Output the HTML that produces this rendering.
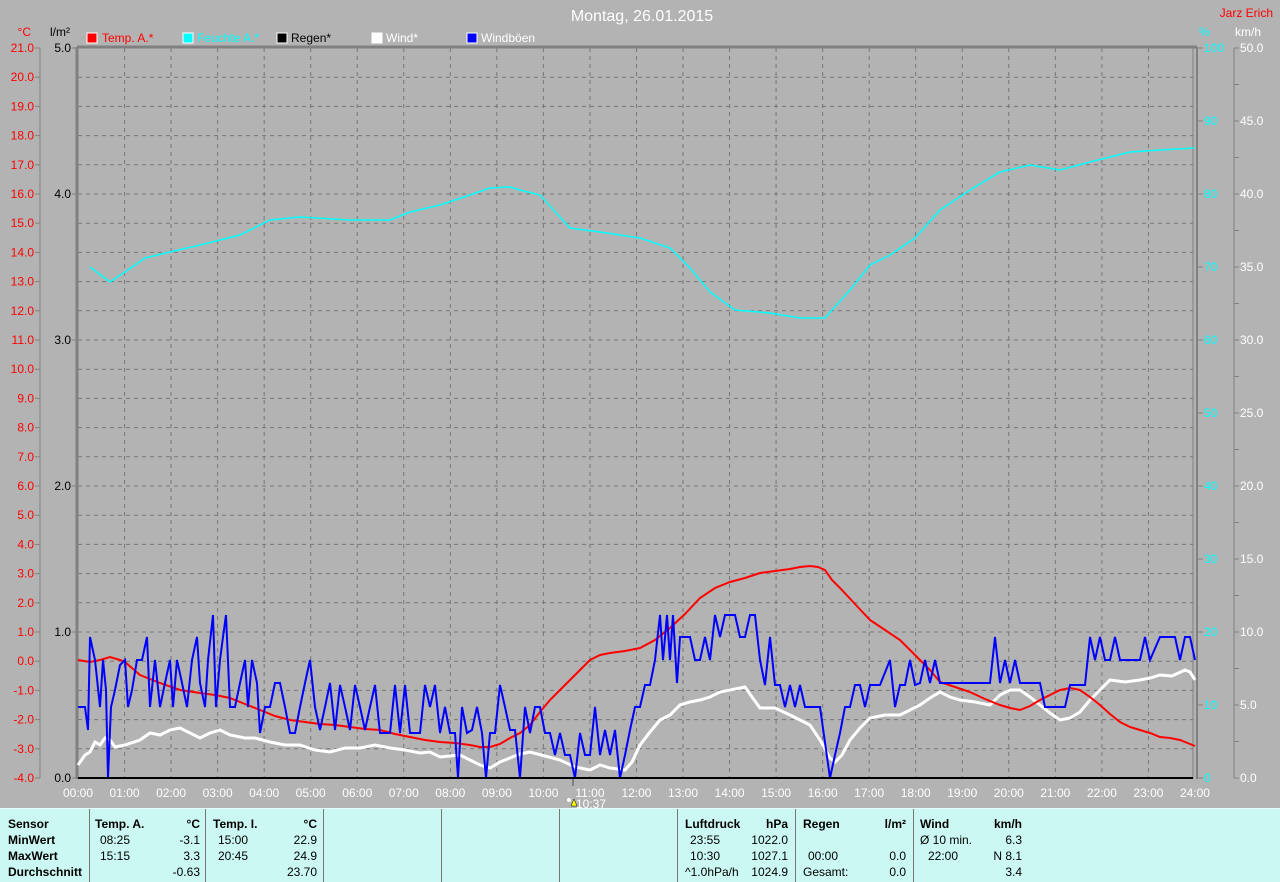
<!DOCTYPE html>
<html><head><meta charset="utf-8"><style>
html,body{margin:0;padding:0;background:#b3b3b3;width:1280px;height:881px;overflow:hidden;font-family:"Liberation Sans",sans-serif;}
svg{position:absolute;left:0;top:0}
.tbl{position:absolute;left:0;top:808px;width:1280px;height:73px;background:#ccf8f4;border-top:1px solid #e8ffff;font-size:12px;color:#000}
.c{position:absolute;top:0;height:73px;border-left:1px solid #777}
.t{position:absolute;white-space:nowrap}
.b{font-weight:bold}
</style></head><body>
<svg width="1280" height="808" xmlns="http://www.w3.org/2000/svg" font-family="Liberation Sans, sans-serif" font-size="12">
<text x="642" y="21" fill="#fff" font-size="16" text-anchor="middle">Montag, 26.01.2015</text>
<text x="1273" y="17" fill="#f00" text-anchor="end">Jarz Erich</text>
<text x="31" y="36" fill="#f00" text-anchor="end">°C</text>
<text x="70" y="36" fill="#000" text-anchor="end">l/m²</text>
<text x="1199" y="36" fill="#0ff">%</text>
<text x="1235" y="36" fill="#fff">km/h</text>
<g>
<rect x="87" y="33" width="10" height="10" fill="#f00" stroke="#fff"/><text x="102" y="42" fill="#f00">Temp. A.*</text>
<rect x="183" y="33" width="10" height="10" fill="#0ff" stroke="#fff"/><text x="197" y="42" fill="#0ff">Feuchte A.*</text>
<rect x="277" y="33" width="10" height="10" fill="#000" stroke="#fff"/><text x="291" y="42" fill="#000">Regen*</text>
<rect x="372" y="33" width="10" height="10" fill="#fff" stroke="#fff"/><text x="386" y="42" fill="#fff">Wind*</text>
<rect x="467" y="33" width="10" height="10" fill="#00f" stroke="#fff"/><text x="481" y="42" fill="#fff">Windböen</text>
</g>
<g id="grid" stroke="#777" stroke-dasharray="4,4" stroke-width="1">
</g>
<g id="axes"></g>
<line x1="77" y1="47" x2="1197" y2="47" stroke="#808080" stroke-width="3"/>
<line x1="77" y1="47" x2="77" y2="779" stroke="#808080" stroke-width="3"/>
<line x1="1193" y1="47" x2="1193" y2="779" stroke="#808080" stroke-width="1"/>
<line x1="1197" y1="47" x2="1197" y2="779" stroke="#808080" stroke-width="2"/>
<line x1="40" y1="48" x2="40" y2="778" stroke="#808080"/>
<line x1="1234" y1="48" x2="1234" y2="778" stroke="#808080"/>
<polyline fill="none" stroke="#0ff" stroke-width="1.5" points="90,267 110,282 125,272 145,258 170,252 200,245 240,235 270,220 300,217 350,220 390,220 410,212 440,205 470,195 490,188 510,187 520,190 540,195 570,228 600,232 640,238 670,248 690,268 710,292 735,310 770,313 800,318 825,318 850,290 870,265 890,255 915,238 940,210 970,190 1000,172 1030,165 1060,170 1090,162 1130,152 1160,150 1195,148"/>
<polyline fill="none" stroke="#fff" stroke-width="3" points="78,765 85,755 90,752 95,742 100,745 105,738 110,740 115,747 125,745 140,740 150,733 160,735 170,730 180,728 190,733 200,738 210,733 220,730 230,735 245,738 255,738 270,742 285,745 300,745 315,750 330,752 345,748 360,748 375,745 390,748 405,750 420,753 430,752 440,757 450,756 460,755 470,760 480,765 490,768 500,762 510,758 520,754 530,752 545,756 560,760 575,767 590,770 600,765 610,768 625,770 632,762 640,745 650,732 660,720 670,715 680,705 690,702 700,700 710,697 720,692 730,690 745,687 752,697 760,708 775,708 790,715 800,720 810,725 820,740 830,758 835,762 842,755 850,740 860,728 870,718 885,715 900,715 910,710 920,705 930,698 940,692 950,697 960,700 975,702 990,705 1000,695 1010,690 1020,690 1030,697 1040,705 1050,713 1060,720 1070,718 1080,712 1090,700 1100,690 1110,680 1125,682 1140,680 1150,678 1160,675 1172,676 1185,670 1190,672 1195,680"/>
<polyline fill="none" stroke="#f00" stroke-width="2" points="78,660 90,662 100,660 110,657 120,660 125,662 140,675 160,683 180,690 200,693 215,695 230,698 245,704 260,710 275,716 290,720 305,722 320,724 335,725 350,727 365,729 380,730 395,734 410,737 425,740 440,742 455,743 470,745 480,747 490,747 500,744 510,738 520,733 530,725 540,712 550,700 560,690 570,680 580,670 590,660 600,655 610,653 625,651 640,648 655,640 670,628 685,614 700,598 715,588 730,582 745,578 760,573 775,571 790,569 800,567 810,566 818,567 825,570 832,580 840,588 855,604 870,620 885,630 900,640 910,650 920,660 930,670 940,682 955,687 970,692 985,699 1000,705 1010,708 1020,710 1030,706 1040,700 1050,695 1060,690 1070,688 1080,690 1090,697 1100,705 1110,714 1120,722 1130,727 1140,730 1150,733 1160,737 1170,738 1180,740 1190,744 1195,746"/>
<polyline fill="none" stroke="#00f" stroke-width="2" points="78,707 85,707 88,730 90,637 95,660 100,707 103,660 106,690 108,778 111,707 115,690 120,665 125,660 128,707 132,690 137,660 142,660 147,637 150,707 155,660 160,707 165,683 170,660 173,707 177,660 182,683 187,707 192,660 197,637 200,683 205,707 208,660 213,615 216,707 220,660 223,637 226,615 230,707 235,707 240,683 245,660 248,707 252,660 257,683 260,733 265,707 270,707 275,683 280,683 285,707 290,733 295,733 300,707 305,683 310,660 315,707 320,730 325,707 330,683 335,730 340,685 345,707 350,730 355,685 360,707 365,730 370,707 375,685 380,733 390,733 395,685 400,733 405,685 410,733 420,733 425,685 430,707 435,685 440,733 445,707 450,733 455,733 458,778 462,707 467,733 472,730 477,707 482,733 486,778 490,733 495,733 500,685 505,707 510,730 515,730 520,778 525,707 530,733 535,707 540,707 545,733 550,733 555,755 560,733 565,755 570,755 575,778 580,733 585,755 590,755 595,707 600,755 605,730 610,755 615,730 620,778 625,755 630,730 635,707 640,707 645,685 650,685 655,660 660,615 663,660 667,615 670,660 673,615 677,683 680,637 690,637 695,660 700,660 705,637 710,660 715,615 720,637 725,615 735,615 740,637 745,637 750,615 755,615 760,660 765,685 770,637 775,685 780,685 785,707 790,685 795,707 800,685 805,707 820,707 830,778 835,755 840,733 845,707 850,707 855,685 860,685 865,707 870,685 880,685 890,660 895,707 900,685 905,685 910,660 915,685 920,683 925,660 930,683 935,660 940,683 990,683 995,637 1000,683 1005,660 1010,683 1015,660 1020,683 1040,683 1045,707 1065,707 1070,685 1085,685 1090,637 1095,660 1100,637 1105,660 1110,660 1115,637 1120,660 1140,660 1145,637 1150,660 1160,637 1175,637 1180,660 1185,637 1190,637 1195,660"/>
<line x1="78" y1="778" x2="1193" y2="778" stroke="#000" stroke-width="2"/>
<line x1="573" y1="779" x2="573" y2="786" stroke="#808080" stroke-width="2"/>
<path d="M571,806 l3,-7 l3,7z" fill="#ff0" stroke="#000" stroke-width="0.5"/>
<circle cx="569" cy="800" r="2" fill="#fff"/>
<text x="576" y="808" fill="#fff">10:37</text>
<script>
(function(){
var ns="http://www.w3.org/2000/svg",g=document.getElementById('grid'),a=document.getElementById('axes');
function el(p,tag,at,txt){var e=document.createElementNS(ns,tag);for(var k in at)e.setAttribute(k,at[k]);if(txt!=null)e.textContent=txt;p.appendChild(e);return e;}
for(var i=1;i<25;i++){var y=48+i*29.2;el(g,'line',{x1:78,y1:y,x2:1193,y2:y});}
for(var h=1;h<24;h++){var x=78+h*46.54;el(g,'line',{x1:x,y1:48,x2:x,y2:778});}
for(var h=0;h<=24;h++){var x=78+h*46.54;el(a,'text',{x:x,y:797,fill:'#fff','text-anchor':'middle'},(h<10?'0':'')+h+':00');}
for(var i=0;i<=25;i++){var y=48+i*29.2,v=(21-i).toFixed(1);el(a,'text',{x:34,y:y+4,fill:'#f00','text-anchor':'end'},v);el(a,'line',{x1:35,y1:y,x2:40,y2:y,stroke:'#808080'});}
for(var i=0;i<=5;i++){var y=48+i*146;el(a,'text',{x:71,y:y+4,fill:'#000','text-anchor':'end'},(5-i).toFixed(1));el(a,'line',{x1:72,y1:y,x2:77,y2:y,stroke:'#808080'});}
for(var i=0;i<=10;i++){var y=48+i*73;el(a,'line',{x1:1197,y1:y,x2:1203,y2:y,stroke:'#808080'});el(a,'text',{x:1204,y:y+4,fill:'#0ff'},String(100-i*10));}
for(var i=0;i<=20;i++){var y=48+i*36.5;el(a,'line',{x1:1234,y1:y,x2:1239,y2:y,stroke:'#808080'});if(i%2==0)el(a,'text',{x:1240,y:y+4,fill:'#fff'},(50-i*2.5).toFixed(1));}
})();
</script>
</svg>
<div class="tbl">
<div class="c" style="left:89px"></div><div class="c" style="left:205px"></div><div class="c" style="left:323px"></div><div class="c" style="left:441px"></div><div class="c" style="left:559px"></div><div class="c" style="left:677px"></div><div class="c" style="left:795px"></div><div class="c" style="left:913px"></div>
<div class="t b" style="left:8px;top:8px">Sensor</div>
<div class="t b" style="left:8px;top:24px">MinWert</div>
<div class="t b" style="left:8px;top:40px">MaxWert</div>
<div class="t b" style="left:8px;top:56px">Durchschnitt</div>
<div class="t b" style="left:95px;top:8px">Temp. A.</div><div class="t b" style="right:1080px;top:8px">°C</div>
<div class="t" style="left:100px;top:24px">08:25</div><div class="t" style="right:1080px;top:24px">-3.1</div>
<div class="t" style="left:100px;top:40px">15:15</div><div class="t" style="right:1080px;top:40px">3.3</div>
<div class="t" style="right:1080px;top:56px">-0.63</div>
<div class="t b" style="left:213px;top:8px">Temp. I.</div><div class="t b" style="right:963px;top:8px">°C</div>
<div class="t" style="left:218px;top:24px">15:00</div><div class="t" style="right:963px;top:24px">22.9</div>
<div class="t" style="left:218px;top:40px">20:45</div><div class="t" style="right:963px;top:40px">24.9</div>
<div class="t" style="right:963px;top:56px">23.70</div>
<div class="t b" style="left:685px;top:8px">Luftdruck</div><div class="t b" style="right:492px;top:8px">hPa</div>
<div class="t" style="left:690px;top:24px">23:55</div><div class="t" style="right:492px;top:24px">1022.0</div>
<div class="t" style="left:690px;top:40px">10:30</div><div class="t" style="right:492px;top:40px">1027.1</div>
<div class="t" style="left:685px;top:56px">^1.0hPa/h</div><div class="t" style="right:492px;top:56px">1024.9</div>
<div class="t b" style="left:803px;top:8px">Regen</div><div class="t b" style="right:374px;top:8px">l/m²</div>
<div class="t" style="left:808px;top:40px">00:00</div><div class="t" style="right:374px;top:40px">0.0</div>
<div class="t" style="left:803px;top:56px">Gesamt:</div><div class="t" style="right:374px;top:56px">0.0</div>
<div class="t b" style="left:920px;top:8px">Wind</div><div class="t b" style="right:258px;top:8px">km/h</div>
<div class="t" style="left:920px;top:24px">Ø 10 min.</div><div class="t" style="right:258px;top:24px">6.3</div>
<div class="t" style="left:928px;top:40px">22:00</div><div class="t" style="right:258px;top:40px">N 8.1</div>
<div class="t" style="right:258px;top:56px">3.4</div>
</div>
</body></html>
